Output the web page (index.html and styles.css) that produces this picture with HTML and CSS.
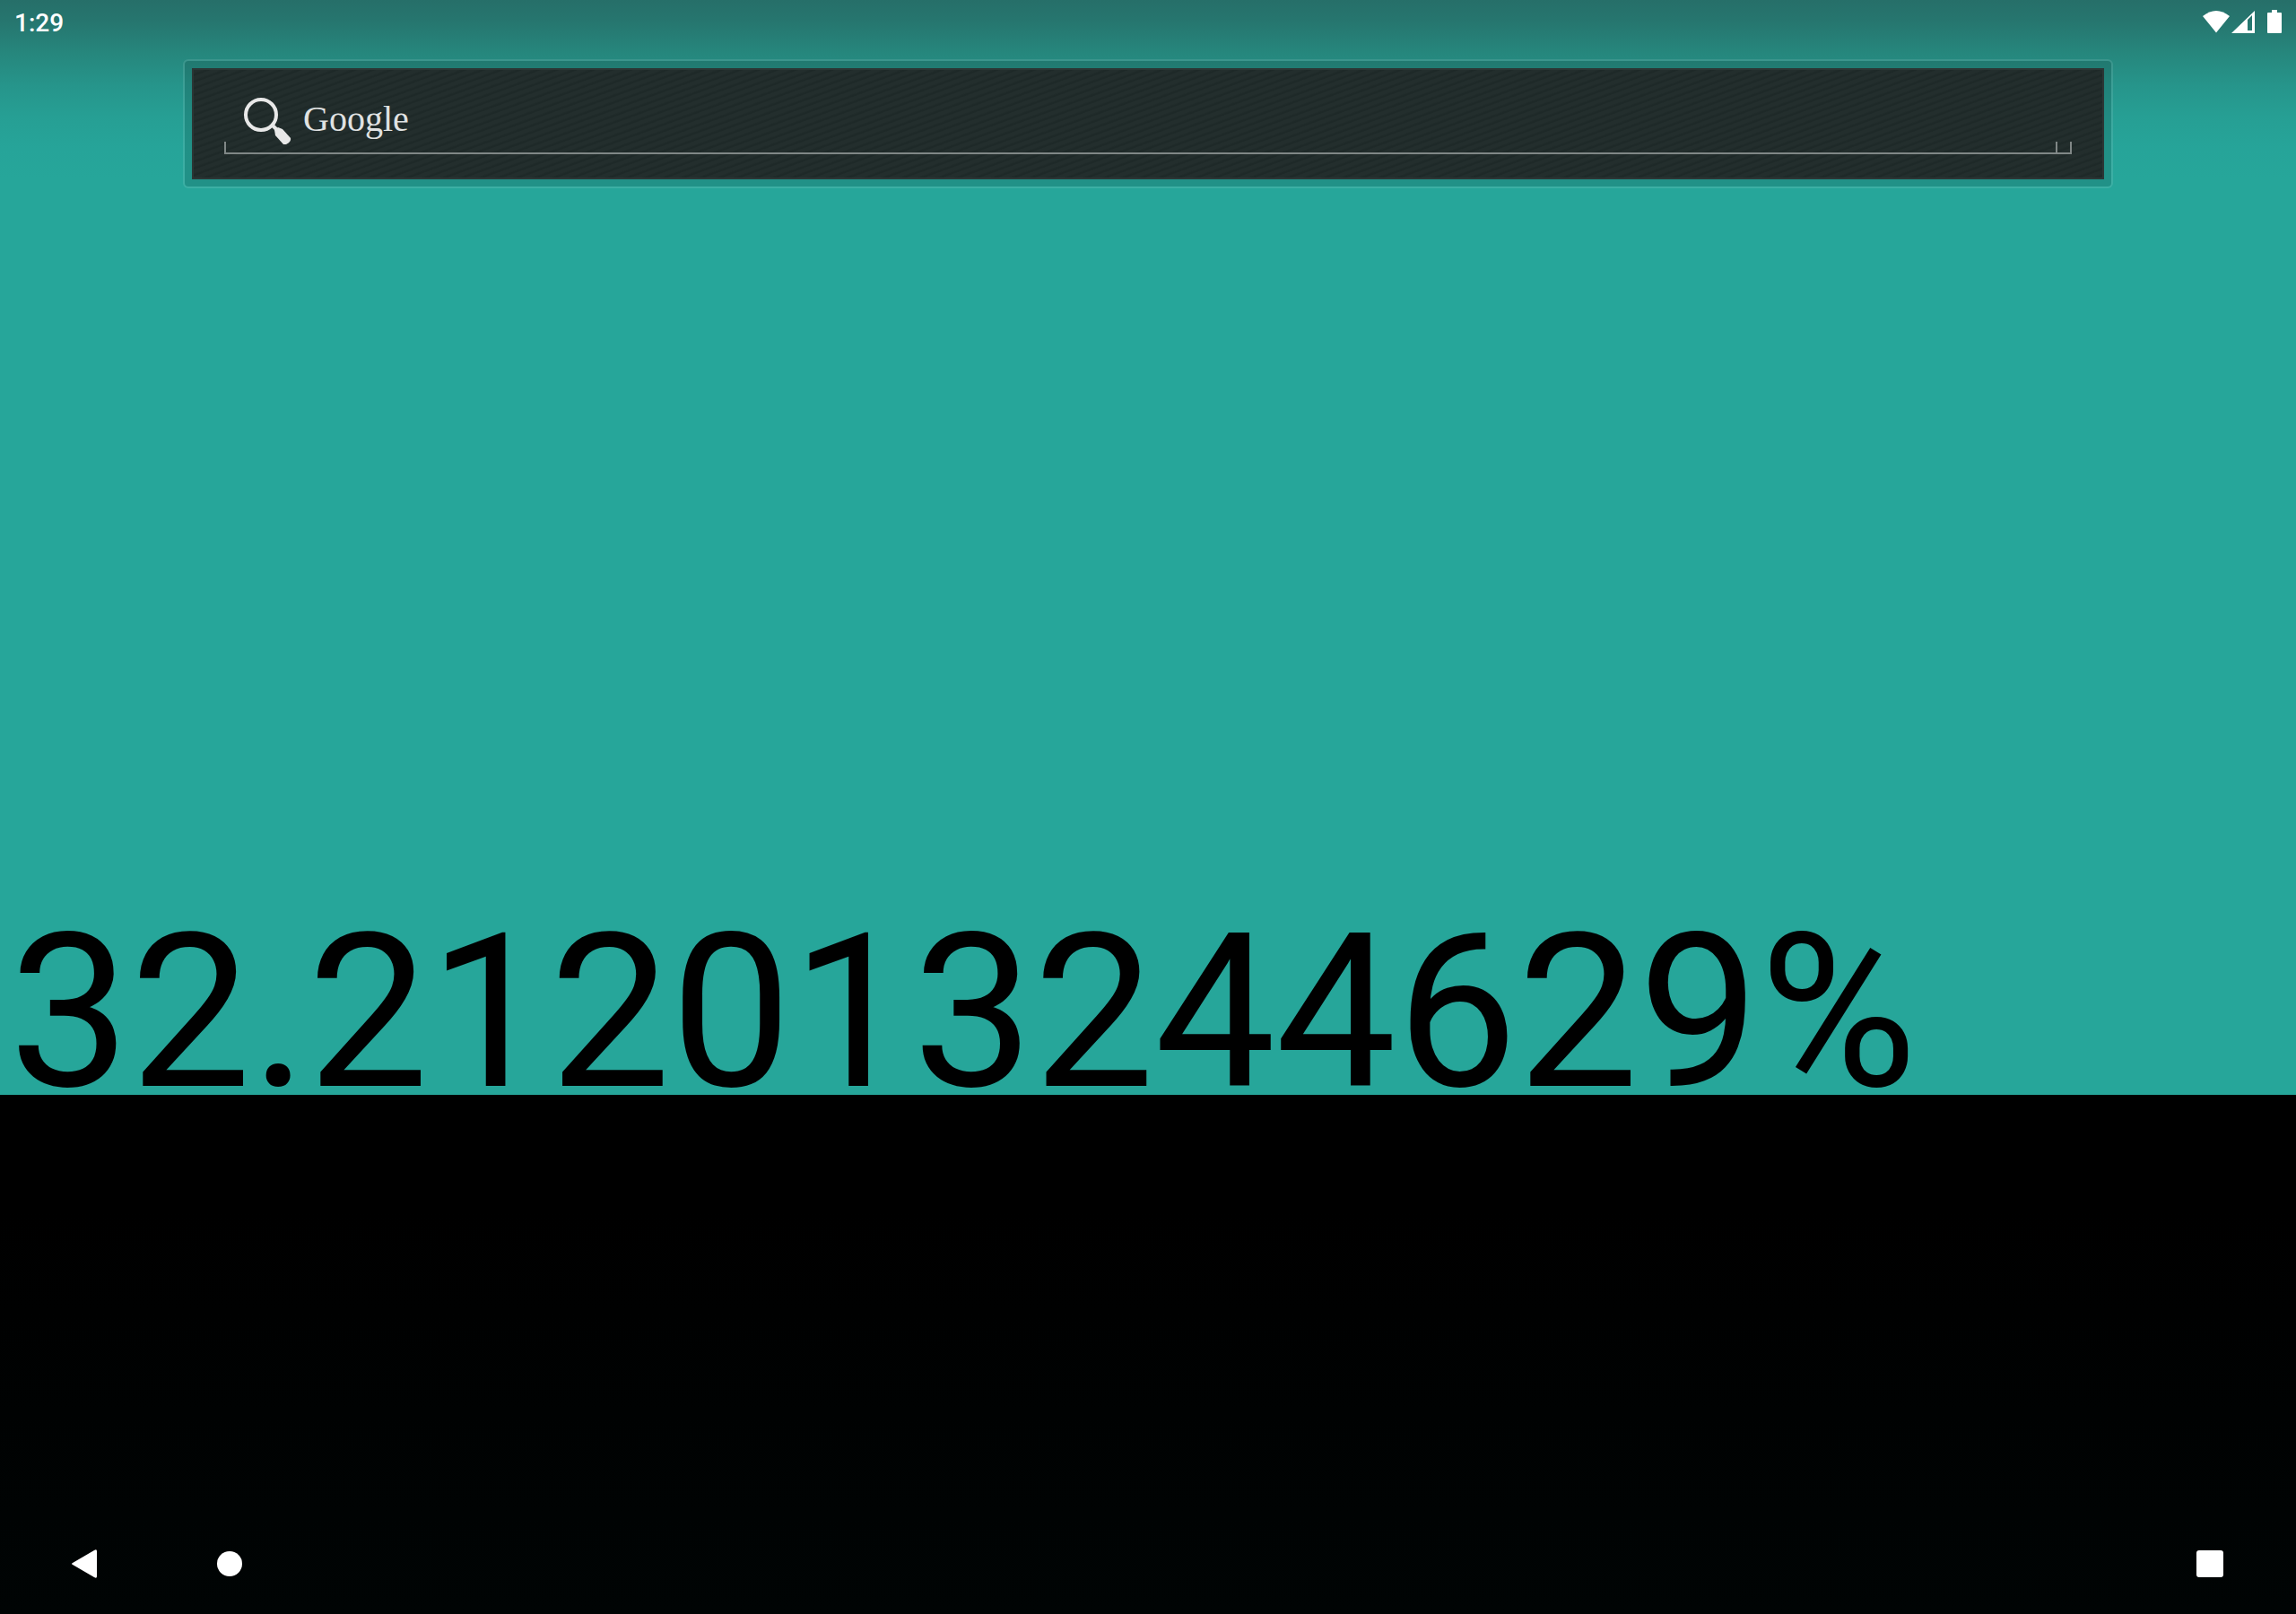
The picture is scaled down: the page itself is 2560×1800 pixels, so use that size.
FILE: index.html
```html
<!DOCTYPE html>
<html lang="en">
<head>
<meta charset="utf-8">
<title>Home screen</title>
<link rel="stylesheet" href="styles.css">
</head>
<body>
<div class="screen">
  <div class="wallpaper">
    <header class="status">
      <time class="clock">1:29</time>
      <div class="indicators">
        <svg class="wifi" width="32" height="26" viewBox="0 0 32 26" aria-label="Wi-Fi"><path d="M0 7Q15-5 30 7L15 25.500Z"/></svg>
        <svg class="signal" width="26" height="26" viewBox="0 0 26 26" aria-label="Signal"><path fill-rule="evenodd" d="M0 26L26 1V26ZM18 11V23H23V6Z"/></svg>
        <svg class="battery" width="16" height="26" viewBox="0 0 16 26" aria-label="Battery"><path d="M5 0H11V3H15Q16 3 16 4V25Q16 26 15 26H1Q0 26 0 25V4Q0 3 1 3H5Z"/></svg>
      </div>
    </header>
    <form class="widget">
      <div class="panel">
        <label class="brand" for="query">
          <svg class="lens" width="56" height="56" viewBox="0 0 56 56" aria-hidden="true"><circle cx="21" cy="20" r="17" fill="none" stroke="#e8e8e8" stroke-width="4"/><path d="M33 31L39 37" stroke="#e8e8e8" stroke-width="4"/><path d="M36 37L40 34L45 36L54 46Q55 50 49 53H46L37 43Z" fill="#e8e8e8"/></svg>
          <span class="name">Google</span>
        </label>
        <input class="query" id="query" type="text">
        <button class="voice" type="button" aria-label="Voice search"></button>
      </div>
    </form>
    <p class="percent">32.212013244629%</p>
  </div>
  <nav class="navbar">
    <button class="key back" type="button" aria-label="Back"><svg width="32" height="32" viewBox="0 0 32 32"><path d="M1 15L25 1Q28 -1 28 2V30Q28 33 25 31L1 17Q-1 16 1 15Z"/></svg></button>
    <button class="key home" type="button" aria-label="Home"><svg width="32" height="32" viewBox="0 0 32 32"><circle cx="16" cy="16" r="14"/></svg></button>
    <button class="key recents" type="button" aria-label="Recents"><svg width="32" height="32" viewBox="0 0 32 32"><rect x="1" y="1" width="30" height="30" rx="3"/></svg></button>
  </nav>
</div>
</body>
</html>
```
FILE: styles.css
```css
* { box-sizing: border-box; }
body { margin: 0; background: #000; font-family: Roboto, sans-serif; }
.screen {
  min-height: 100vh;
  display: flex;
  flex-direction: column;
  justify-content: space-between;
  background: linear-gradient(#000 0%, #000 75%, #000404 100%);
}
.wallpaper {
  background: linear-gradient(#266f69 0, #26766f 24px, #26877d 60px, #26958b 96px, #269f94 130px, #26a499 165px, #26a69a 200px);
}
.status {
  height: 66px;
  padding: 11px 16px 0;
  display: flex;
  justify-content: space-between;
  align-items: flex-start;
  color: #fff;
  fill: #fff;
}
.clock { font-size: 28px; line-height: 30px; font-weight: 500; }
.indicators { display: flex; }
.battery { margin-left: 14px; }
.widget {
  margin: 0 204px;
  padding: 8px;
  border: 2px solid rgba(255, 255, 255, .1);
  border-radius: 6px;
  background: rgba(0, 0, 0, .12) padding-box;
}
.panel {
  height: 124px;
  padding: 0 34px 26px;
  border: 2px solid #2b3635;
  display: flex;
  align-items: flex-end;
  background: repeating-linear-gradient(160deg, #232e2d 0, #232e2d 3px, #1e2928 5px, #1e2928 6px, #232e2d 7px);
}
.brand {
  height: 66px;
  padding: 2px 0 0 20px;
  display: flex;
  align-items: flex-start;
  gap: 12px;
  border: solid #808786;
  border-width: 0 0 2px;
  background: linear-gradient(#808786, #808786) left bottom / 2px 12px no-repeat;
}
.name { font: 40px/50px "Liberation Serif", serif; color: #e0e2e2; }
.query {
  flex: 1;
  height: 14px;
  padding: 0;
  border: solid #808786;
  border-width: 0 0 2px;
  background: none;
  color: #fff;
  outline: 0;
}
.voice {
  width: 18px;
  height: 14px;
  padding: 0;
  border: solid #808786;
  border-width: 0 2px 2px;
  background: none;
}
.percent { margin: 827px 0 0; padding-left: 10px; font-size: 240px; line-height: 184px; white-space: nowrap; }
.navbar { height: 112px; padding: 0 80px; display: flex; align-items: center; gap: 128px; }
.key { padding: 0; border: 0; background: none; fill: #fff; display: flex; }
.recents { margin-left: auto; }
```
